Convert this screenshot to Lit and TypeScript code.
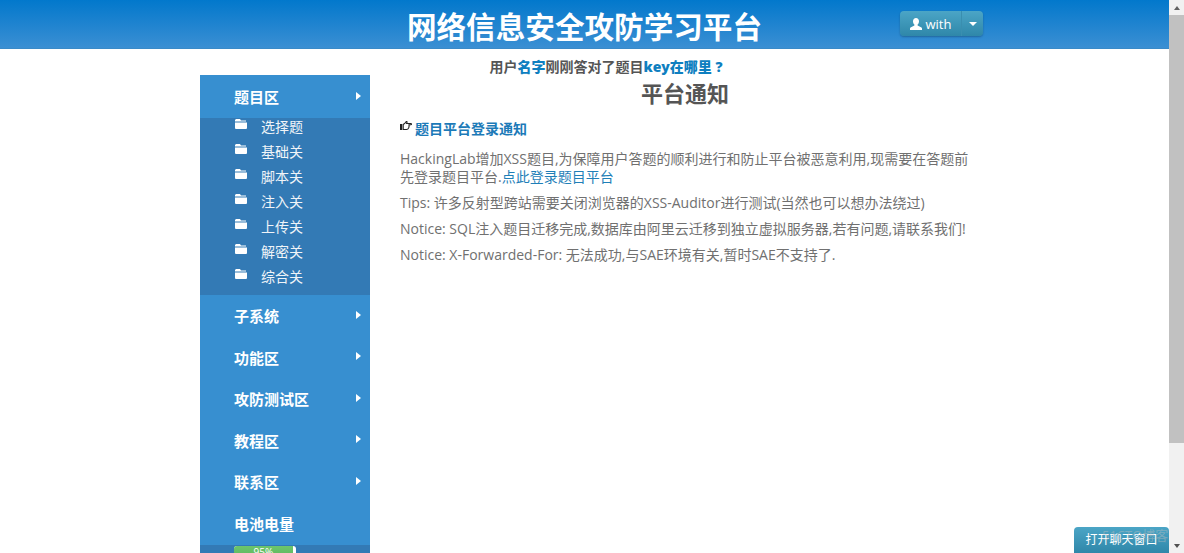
import { LitElement, html, css, svg } from "lit";
import { customElement } from "lit/decorators.js";

const folder = svg`<svg class="folder" width="12" height="10" viewBox="0 0 12 10"><path fill="#fff" d="M1 0h4l1 1.500h5v1H0V1zM0 3.500h12V9a1 1 0 0 1-1 1H1a1 1 0 0 1-1-1z"/></svg>`;
const subs = ["选择题", "基础关", "脚本关", "注入关", "上传关", "解密关", "综合关"];
const mains = ["子系统", "功能区", "攻防测试区", "教程区", "联系区"];

@customElement("app-root")
export class AppRoot extends LitElement {
  static styles = css`
    :host { display: flex; width: 1184px; height: 553px; overflow: hidden; position: relative;
      font-family: "Open Sans", "Noto Sans CJK SC", sans-serif; color: #555; background: #fff; }
    .main { width: 1169px; flex: none; display: flex; flex-direction: column; height: 553px; overflow: hidden; }
    .top { height: 49px; flex: none; box-sizing: border-box; border-bottom: 1px solid #3a8ac8;
      background: linear-gradient(#0278cc, #3b8fd3); display: flex; justify-content: center; position: relative; }
    .top h1 { margin: 0; font-size: 29.600px; line-height: 51px; height: 49px; font-weight: 700; color: #fff; letter-spacing: 0;
      font-family: "Noto Sans CJK SC", sans-serif; }
    .btn { position: absolute; left: 900px; top: 11px; height: 25px; width: 83px; display: flex; border-radius: 4px;
      background: linear-gradient(#4ba5c6, #2f87a9); box-shadow: 0 1px 2px rgba(0,0,0,.25); color: #fff; font-size: 13px; }
    .btn .l { width: 61px; display: flex; align-items: center; justify-content: center; gap: 4px; border-right: 1px solid #3a8eaf; }
    .btn .r { flex: 1; display: flex; align-items: center; justify-content: center; }
    .caret { width: 0; height: 0; border: 4px solid transparent; border-top-color: #fff; border-bottom: 0; }
    .notice { height: 26px; flex: none; margin-left: 43px; text-align: center; font-size: 14px; line-height: 36px; font-weight: 700; color: #555; white-space: nowrap; }
    .notice b { color: #0f7fc0; }
    .wrap { display: flex; gap: 30px; margin-left: 200px; flex: 1; }
    .side { width: 170px; flex: none; background: #378fd0; color: #fff; display: flex; flex-direction: column; }
    .head { height: 41.500px; padding: 0 9px 2px 34px; display: flex; align-items: center; justify-content: space-between;
      font-size: 15px; font-weight: 700; flex: none; box-sizing: border-box; }
    .head.first { height: 43px; padding-bottom: 0; }
    .arrow { width: 0; height: 0; border: 4px solid transparent; border-left: 5px solid #fff; border-right: 0; margin-top: -2px; }
    .subs { background: #337ab5; height: 177px; flex: none; box-sizing: border-box; margin-bottom: 1px; overflow: hidden; }
    .sub { height: 25.100px; display: flex; align-items: center; padding-left: 35px; font-size: 14px; color: #f0f4f8; position: relative; top: -5px; }
    .folder { margin-top: -4px; }
    .sub span { margin-left: 14px; }
    .batt { background: #337ab5; height: 30px; padding: 1px 0 0 34px; flex: none; }
    .bar { width: 62px; height: 20px; background: #fff; border-radius: 3px; overflow: hidden; }
    .fill { height: 100%; background: linear-gradient(#6cc56c, #55ad55); text-align: center; font-size: 10px; line-height: 13px; color: #fff; }
    .content { width: 570px; flex: none; font-size: 14px; line-height: 18px; }
    .content h2 { margin: 0; text-align: center; font-size: 22px; line-height: 30px; font-weight: 700; color: #555; padding-top: 3px; height: 30px; }
    .tit { margin-top: 11px; display: flex; align-items: center; gap: 3px; font-size: 14px; font-weight: 700; color: #1c7ab8; height: 20px; margin-bottom: 11px; }
    .tit svg { margin-top: -6px; }
    .content p { margin: 0 0 8px; color: #707070; }
    .content a { color: #1f7fb8; }
    .scroll { width: 15px; flex: none; background: #f1f1f1; display: flex; flex-direction: column; align-items: center; }
    .sb { height: 15px; display: flex; align-items: center; justify-content: center; }
    .up { width: 0; height: 0; border: 3.500px solid transparent; border-bottom: 4px solid #606060; border-top: 0; }
    .down { width: 0; height: 0; border: 3.500px solid transparent; border-top: 4px solid #505050; border-bottom: 0; }
    .thumb { width: 15px; height: 428px; flex: none; background: #c1c1c1; }
    .grow { flex: 1; }
    .chat { position: absolute; left: 1074px; top: 527px; width: 95px; height: 26px; box-sizing: border-box; border-radius: 4px 4px 0 0;
      background: linear-gradient(#4ba5c6, #2f87a9); color: #fff; font-size: 12px; line-height: 26px; text-align: center; }
    .mark { position: absolute; left: 1102px; top: 527px; font-size: 13px; line-height: 16px; color: rgba(190,190,190,.45); white-space: nowrap; }
  `;
  render() {
    return html`
      <div class="main">
        <div class="top">
          <h1>网络信息安全攻防学习平台</h1>
          <div class="btn">
            <div class="l"><svg width="12" height="12" viewBox="0 0 12 12"><path fill="#fff" d="M6 0c1.800 0 3 1.300 3 3.200 0 1.400-.6 2.600-1.400 3.200v1.200l3.400 1.600c.7.300 1 .8 1 1.300V12H0v-1.500c0-.5.300-1 1-1.300l3.400-1.600V6.400C3.600 5.800 3 4.600 3 3.200 3 1.300 4.200 0 6 0z"/></svg>with</div>
            <div class="r"><div class="caret"></div></div>
          </div>
        </div>
        <div class="notice">用户<b>名字</b>刚刚答对了题目<b>key在哪里 ?</b></div>
        <div class="wrap">
          <div class="side">
            <div class="head first">题目区<i class="arrow"></i></div>
            <div class="subs">${subs.map((s) => html`<div class="sub">${folder}<span>${s}</span></div>`)}</div>
            ${mains.map((m) => html`<div class="head">${m}<i class="arrow"></i></div>`)}
            <div class="head">电池电量</div>
            <div class="batt"><div class="bar"><div class="fill" style="width:95%">95%</div></div></div>
          </div>
          <div class="content">
            <h2>平台通知</h2>
            <div class="tit"><svg width="12" height="10" viewBox="0 0 12 10"><path fill="none" stroke="#222" stroke-width="1.100" d="M3.200 3.500 5 2.200 6 .8c.4-.5 1.200-.2 1 .5L6.600 2.500h4.300c.8 0 .8 1.300 0 1.300H9c.3 1.900-.3 4.700-2.500 4.700H3.200z"/><rect x="0" y="3" width="2.200" height="6" fill="#222"/></svg>题目平台登录通知</div>
            <p>HackingLab增加XSS题目,为保障用户答题的顺利进行和防止平台被恶意利用,现需要在答题前先登录题目平台.<a>点此登录题目平台</a></p>
            <p>Tips: 许多反射型跨站需要关闭浏览器的XSS-Auditor进行测试(当然也可以想办法绕过)</p>
            <p>Notice: SQL注入题目迁移完成,数据库由阿里云迁移到独立虚拟服务器,若有问题,请联系我们!</p>
            <p>Notice: X-Forwarded-For: 无法成功,与SAE环境有关,暂时SAE不支持了.</p>
          </div>
        </div>
      </div>
      <div class="scroll">
        <div class="sb"><div class="up"></div></div>
        <div class="thumb"></div>
        <div class="grow"></div>
        <div class="sb"><div class="down"></div></div>
      </div>
      <div class="chat">打开聊天窗口</div>
      <div class="mark">51CTO博客</div>
    `;
  }
}
